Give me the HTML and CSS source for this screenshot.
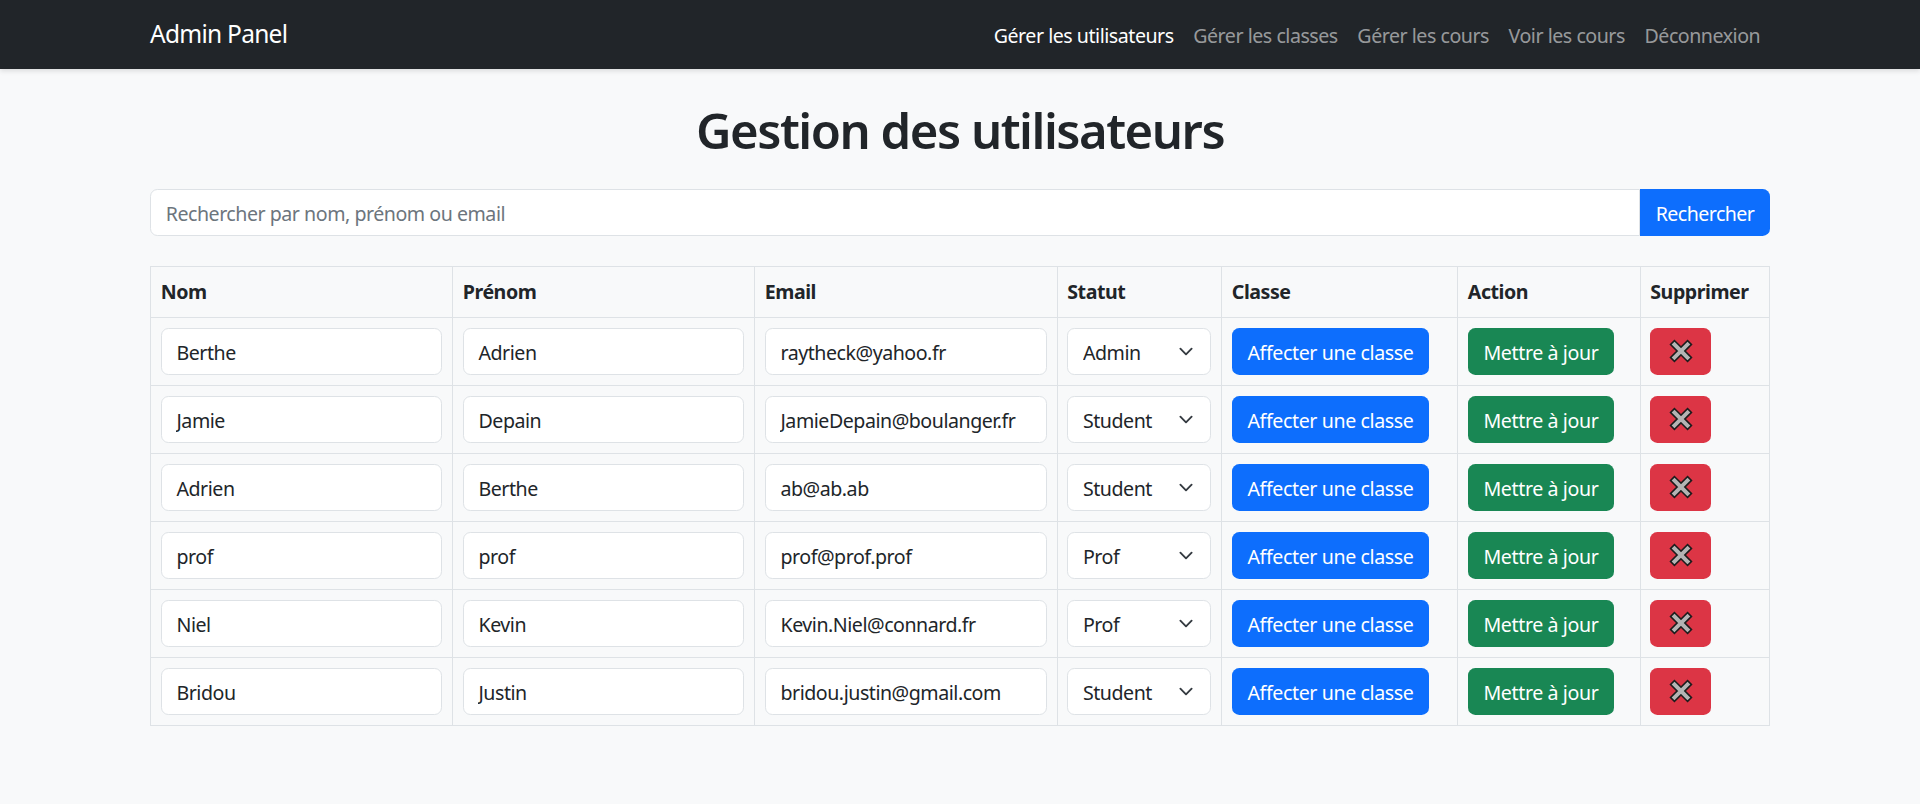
FILE: index.html
```html
<!DOCTYPE html>
<html lang="fr">
<head>
    <meta charset="UTF-8">
    <title>Gestion des utilisateurs</title>
    <link rel="stylesheet" href="styles.css">
</head>
<body>

    <nav class="navbar">
        <a class="brand" href="#">Admin Panel</a>
        <ul class="nav-links">
            <li><a class="nav-link active" href="#">Gérer les utilisateurs</a></li>
            <li><a class="nav-link" href="#">Gérer les classes</a></li>
            <li><a class="nav-link" href="#">Gérer les cours</a></li>
            <li><a class="nav-link" href="#">Voir les cours</a></li>
            <li><a class="nav-link" href="#">Déconnexion</a></li>
        </ul>
    </nav>

    <main class="container">
        <h1>Gestion des utilisateurs</h1>

        <form class="search-group">
            <input type="text" class="field search-input" placeholder="Rechercher par nom, prénom ou email">
            <button type="button" class="btn btn-primary search-btn">Rechercher</button>
        </form>

        <table class="users">
            <colgroup>
                <col class="col-name">
                <col class="col-name">
                <col class="col-email">
                <col class="col-status">
                <col class="col-class">
                <col class="col-action">
                <col class="col-delete">
            </colgroup>
            <thead>
                <tr>
                    <th>Nom</th>
                    <th>Prénom</th>
                    <th>Email</th>
                    <th>Statut</th>
                    <th>Classe</th>
                    <th>Action</th>
                    <th>Supprimer</th>
                </tr>
            </thead>
            <tbody>
                <tr>
                    <td><input type="text" class="field" value="Berthe"></td>
                    <td><input type="text" class="field" value="Adrien"></td>
                    <td><input type="email" class="field" value="raytheck@yahoo.fr"></td>
                    <td><select class="field status"><option selected>Admin</option><option>Student</option><option>Prof</option></select></td>
                    <td><button type="button" class="btn btn-primary">Affecter une classe</button></td>
                    <td><button type="button" class="btn btn-success">Mettre à jour</button></td>
                    <td><button type="button" class="btn btn-danger" aria-label="Supprimer"><svg class="cross" viewBox="0 0 22 22"><path class="cross-edge" d="M5 5 17 17M17 5 5 17"/><path class="cross-fill" d="M5 5 17 17M17 5 5 17"/></svg></button></td>
                </tr>
                <tr>
                    <td><input type="text" class="field" value="Jamie"></td>
                    <td><input type="text" class="field" value="Depain"></td>
                    <td><input type="email" class="field" value="JamieDepain@boulanger.fr"></td>
                    <td><select class="field status"><option>Admin</option><option selected>Student</option><option>Prof</option></select></td>
                    <td><button type="button" class="btn btn-primary">Affecter une classe</button></td>
                    <td><button type="button" class="btn btn-success">Mettre à jour</button></td>
                    <td><button type="button" class="btn btn-danger" aria-label="Supprimer"><svg class="cross" viewBox="0 0 22 22"><path class="cross-edge" d="M5 5 17 17M17 5 5 17"/><path class="cross-fill" d="M5 5 17 17M17 5 5 17"/></svg></button></td>
                </tr>
                <tr>
                    <td><input type="text" class="field" value="Adrien"></td>
                    <td><input type="text" class="field" value="Berthe"></td>
                    <td><input type="email" class="field" value="ab@ab.ab"></td>
                    <td><select class="field status"><option>Admin</option><option selected>Student</option><option>Prof</option></select></td>
                    <td><button type="button" class="btn btn-primary">Affecter une classe</button></td>
                    <td><button type="button" class="btn btn-success">Mettre à jour</button></td>
                    <td><button type="button" class="btn btn-danger" aria-label="Supprimer"><svg class="cross" viewBox="0 0 22 22"><path class="cross-edge" d="M5 5 17 17M17 5 5 17"/><path class="cross-fill" d="M5 5 17 17M17 5 5 17"/></svg></button></td>
                </tr>
                <tr>
                    <td><input type="text" class="field" value="prof"></td>
                    <td><input type="text" class="field" value="prof"></td>
                    <td><input type="email" class="field" value="prof@prof.prof"></td>
                    <td><select class="field status"><option>Admin</option><option>Student</option><option selected>Prof</option></select></td>
                    <td><button type="button" class="btn btn-primary">Affecter une classe</button></td>
                    <td><button type="button" class="btn btn-success">Mettre à jour</button></td>
                    <td><button type="button" class="btn btn-danger" aria-label="Supprimer"><svg class="cross" viewBox="0 0 22 22"><path class="cross-edge" d="M5 5 17 17M17 5 5 17"/><path class="cross-fill" d="M5 5 17 17M17 5 5 17"/></svg></button></td>
                </tr>
                <tr>
                    <td><input type="text" class="field" value="Niel"></td>
                    <td><input type="text" class="field" value="Kevin"></td>
                    <td><input type="email" class="field" value="Kevin.Niel@connard.fr"></td>
                    <td><select class="field status"><option>Admin</option><option>Student</option><option selected>Prof</option></select></td>
                    <td><button type="button" class="btn btn-primary">Affecter une classe</button></td>
                    <td><button type="button" class="btn btn-success">Mettre à jour</button></td>
                    <td><button type="button" class="btn btn-danger" aria-label="Supprimer"><svg class="cross" viewBox="0 0 22 22"><path class="cross-edge" d="M5 5 17 17M17 5 5 17"/><path class="cross-fill" d="M5 5 17 17M17 5 5 17"/></svg></button></td>
                </tr>
                <tr>
                    <td><input type="text" class="field" value="Bridou"></td>
                    <td><input type="text" class="field" value="Justin"></td>
                    <td><input type="email" class="field" value="bridou.justin@gmail.com"></td>
                    <td><select class="field status"><option>Admin</option><option selected>Student</option><option>Prof</option></select></td>
                    <td><button type="button" class="btn btn-primary">Affecter une classe</button></td>
                    <td><button type="button" class="btn btn-success">Mettre à jour</button></td>
                    <td><button type="button" class="btn btn-danger" aria-label="Supprimer"><svg class="cross" viewBox="0 0 22 22"><path class="cross-edge" d="M5 5 17 17M17 5 5 17"/><path class="cross-fill" d="M5 5 17 17M17 5 5 17"/></svg></button></td>
                </tr>
            </tbody>
        </table>
    </main>

</body>
</html>
```

FILE: styles.css
```css
html {
    font-size: 19.6px;
}
body {
    background-color: #f8f9fa;
    color: #212529;
    font-family: "Noto Sans", "Open Sans", sans-serif;
    line-height: 1.5;
    margin: 0;
    letter-spacing: -0.024em;
}
a {
    text-decoration: none;
}

.navbar {
    background-color: #212529;
    box-shadow: 0 2px 5px rgba(0, 0, 0, 0.12);
    display: flex;
    align-items: center;
    justify-content: space-between;
    height: 69px;
    padding: 0 150px;
}
.brand {
    color: #fff;
    font-size: 1.25rem;
    letter-spacing: -0.03em;
}
.nav-links {
    display: flex;
    list-style: none;
    margin: 0;
    padding: 0;
}
.nav-link {
    color: rgba(255, 255, 255, 0.55);
    display: block;
    padding: 9px 0.5rem 7px;
}
.nav-link.active {
    color: #fff;
}

.container {
    margin: 0 auto;
    width: 1620px;
}
h1 {
    font-size: 2.5rem;
    font-weight: 600;
    letter-spacing: -0.03em;
    line-height: 1.2;
    margin: 32px 0 29px;
    text-align: center;
}

.field {
    background-color: #fff;
    border: 1px solid #dee2e6;
    border-radius: 0.375rem;
    box-sizing: border-box;
    color: #212529;
    font: inherit;
    letter-spacing: inherit;
    display: block;
    height: 47px;
    padding: 8px 0.75rem 6px;
    width: 100%;
}
.field::placeholder {
    color: #6c757d;
}
.status {
    appearance: none;
    background-image: url("data:image/svg+xml,%3csvg xmlns='http://www.w3.org/2000/svg' viewBox='0 0 16 16'%3e%3cpath fill='none' stroke='%23343a40' stroke-linecap='round' stroke-linejoin='round' stroke-width='2' d='m2 5 6 6 6-6'/%3e%3c/svg%3e");
    background-position: right 0.75rem center;
    background-repeat: no-repeat;
    background-size: 1rem 0.75rem;
    padding-right: 2.25rem;
}

.btn {
    border: 1px solid transparent;
    border-radius: 0.375rem;
    color: #fff;
    cursor: pointer;
    font: inherit;
    letter-spacing: -0.02em;
    height: 47px;
    padding: 8px 0.75rem 6px;
    white-space: nowrap;
}
.btn-primary {
    background-color: #0d6efd;
}
.btn-success {
    background-color: #198754;
}
.btn-danger {
    background-color: #dc3545;
    display: flex;
    align-items: center;
    justify-content: center;
    padding: 0;
    width: 61px;
}

.search-group {
    display: flex;
    margin-bottom: 30px;
}
.search-input {
    border-radius: 0.375rem 0 0 0.375rem;
    flex: 1;
}
.search-btn {
    border-radius: 0 0.375rem 0.375rem 0;
    letter-spacing: -0.028em;
    width: 130px;
}

.users {
    border-collapse: collapse;
    table-layout: fixed;
    width: 1619px;
}
.users th,
.users td {
    border: 1px solid #dee2e6;
    padding: 0.5rem;
    text-align: left;
}
.users td {
    height: 68px;
    box-sizing: border-box;
}
.users th {
    box-sizing: border-box;
    font-weight: 700;
    height: 51px;
}
.col-name { width: 302px; }
.col-email { width: 302.5px; }
.col-status { width: 164.5px; }
.col-class { width: 236px; }
.col-action { width: 182.5px; }
.col-delete { width: 129.5px; }

.cross {
    display: block;
    height: 24px;
    width: 24px;
}
.cross path {
    fill: none;
    stroke-linecap: square;
}
.cross-edge {
    stroke: #1c1c1c;
    stroke-width: 6.5;
}
.cross-fill {
    stroke: #b4b4b4;
    stroke-width: 3.6;
}
```
